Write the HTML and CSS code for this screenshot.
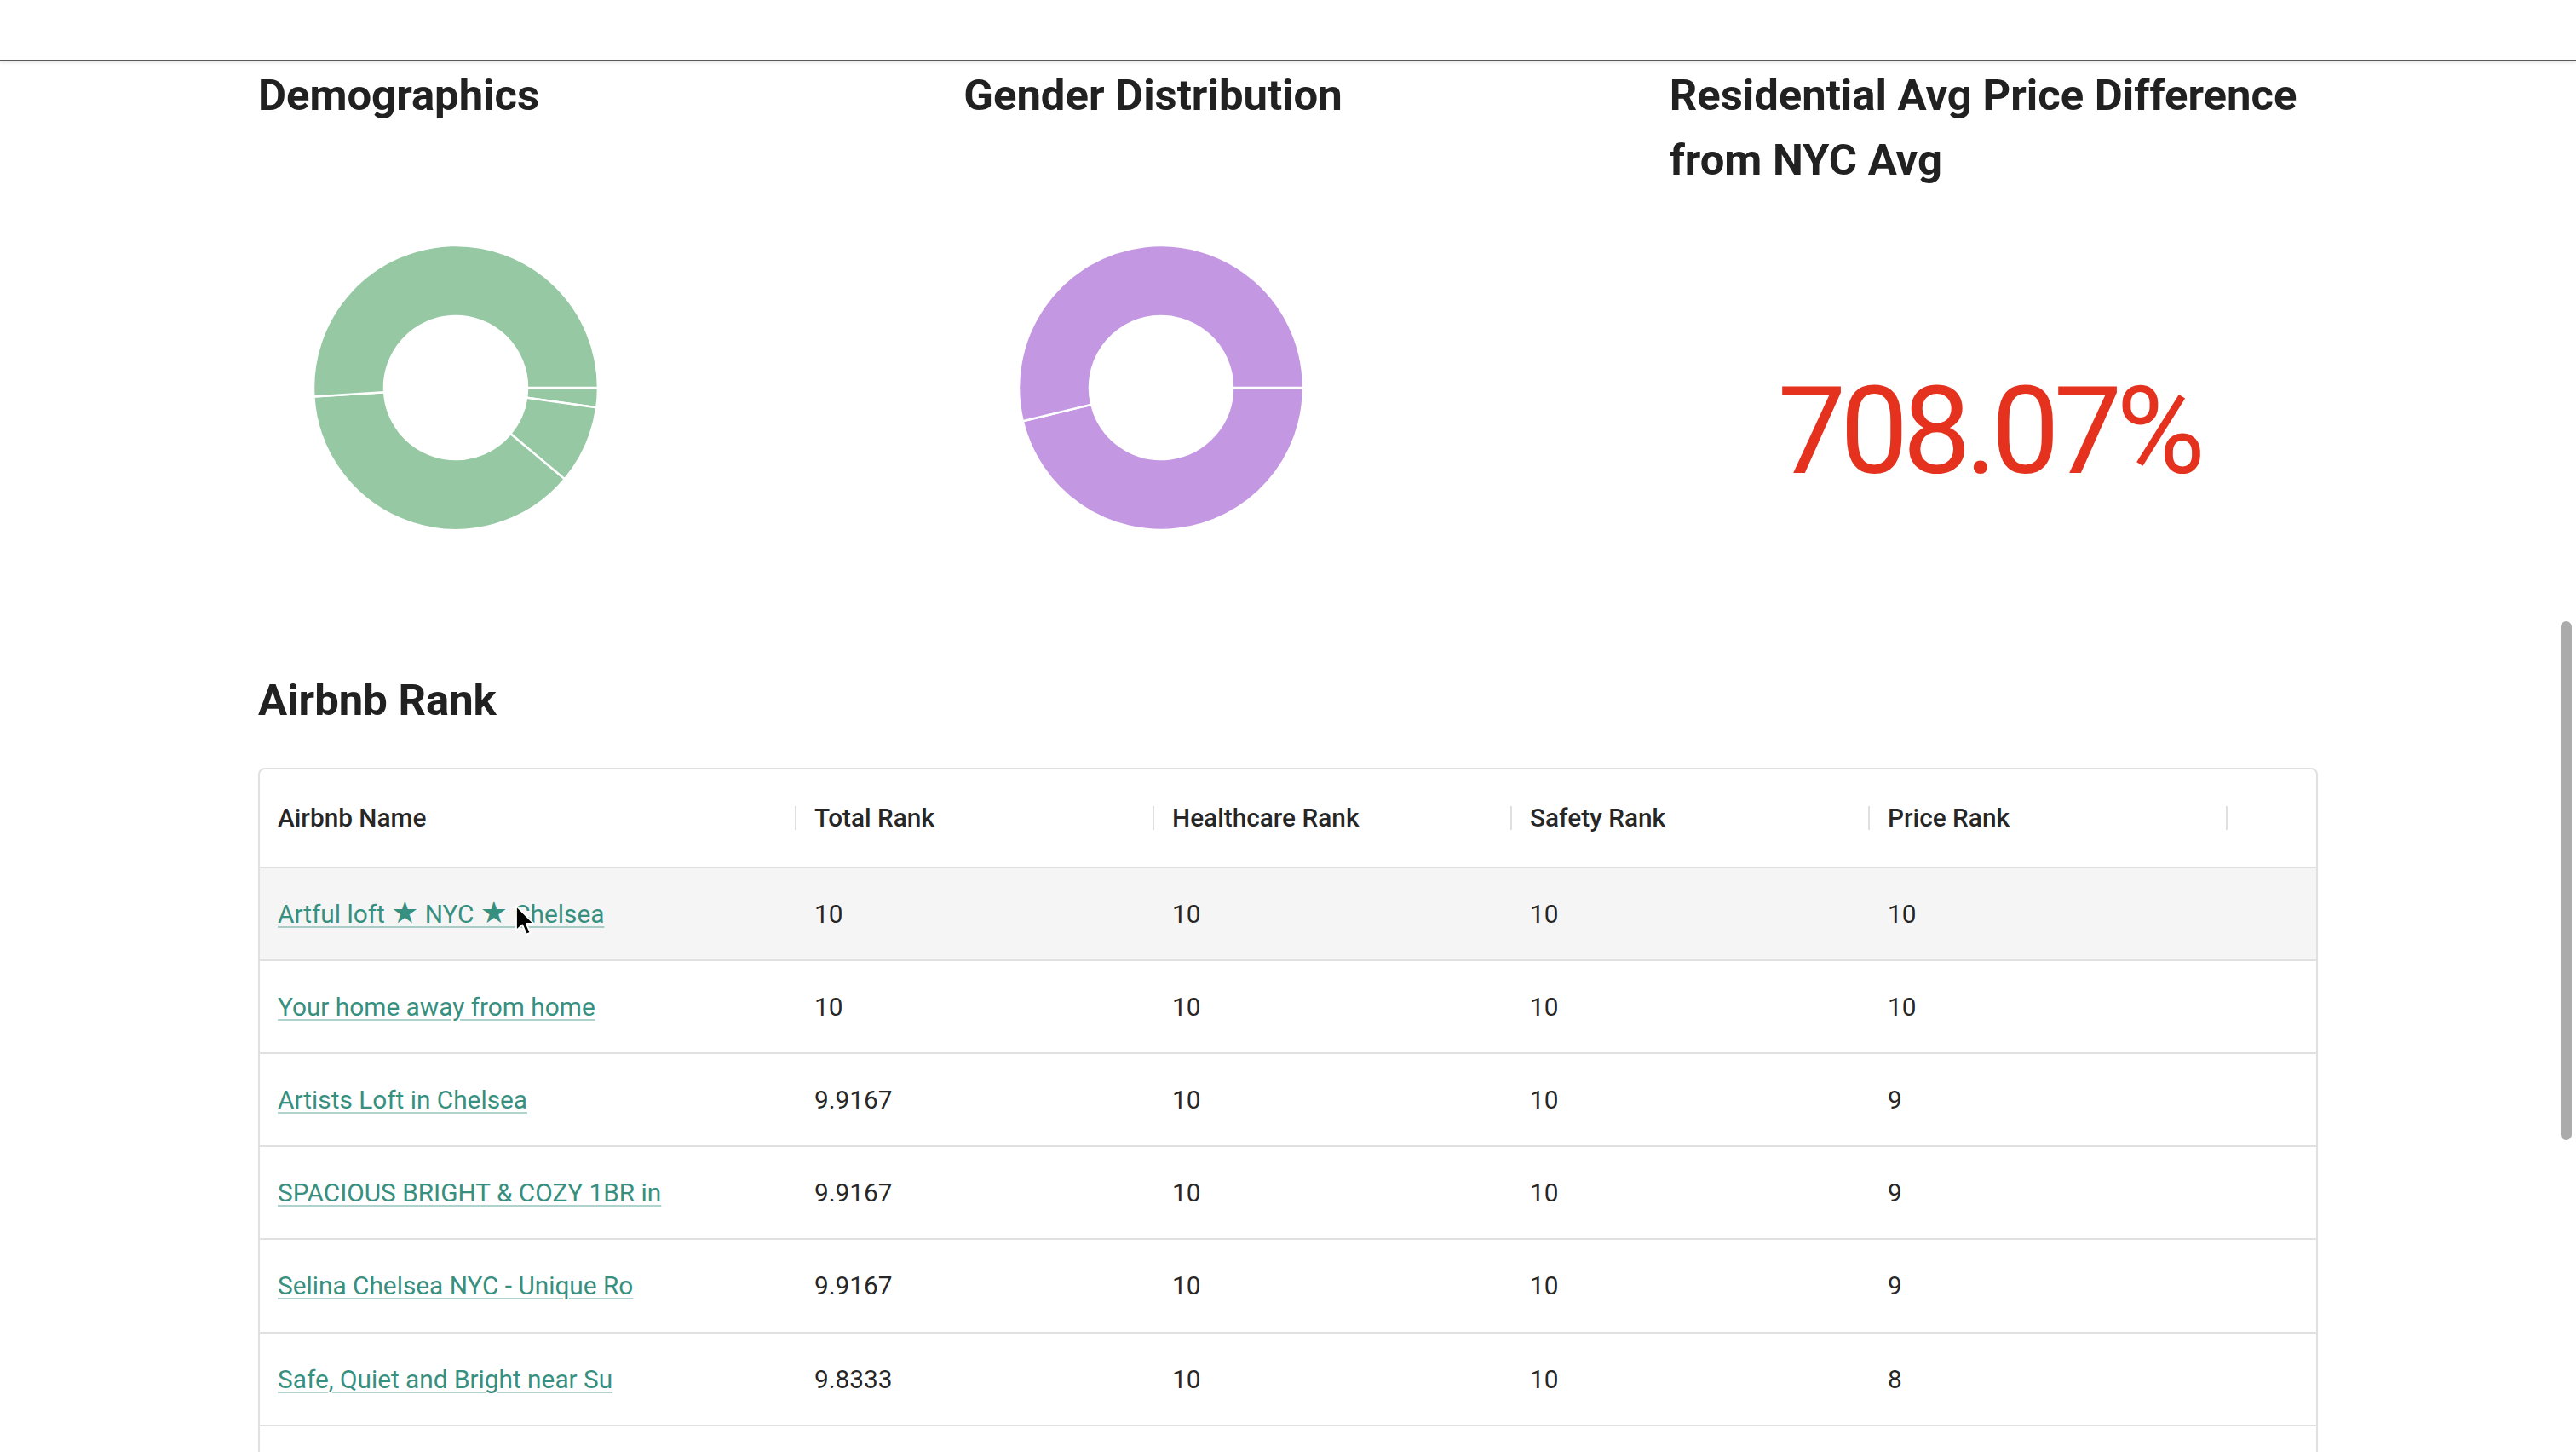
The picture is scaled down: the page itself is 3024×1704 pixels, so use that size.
FILE: index.html
```html
<!DOCTYPE html>
<html lang="en">
<head>
<meta charset="utf-8">
<title>Neighborhood Report</title>
<link rel="stylesheet" href="styles.css">
</head>
<body>
<header class="topbar"></header>
<main class="main">
  <section class="stats">
    <div class="stat">
      <h2 class="section-title">Demographics</h2>
      <svg class="chart" viewBox="0 0 464 610" width="464" height="610">
        <g class="donut-green">
          <path d="M399,305 A167,167 0 0 1 397.375,328.241 L315.183,316.690 A84,84 0 0 0 316,305 Z"/>
          <path d="M397.375,328.241 A167,167 0 0 1 359.929,412.346 L296.347,358.994 A84,84 0 0 0 315.183,316.690 Z"/>
          <path d="M359.929,412.346 A167,167 0 0 1 65.329,315.486 L148.165,310.274 A84,84 0 0 0 296.347,358.994 Z"/>
          <path d="M65.329,315.486 A167,167 0 1 1 399,305 L316,305 A84,84 0 1 0 148.165,310.274 Z"/>
        </g>
      </svg>
    </div>
    <div class="stat">
      <h2 class="section-title">Gender Distribution</h2>
      <svg class="chart" viewBox="0 0 464 610" width="464" height="610">
        <g class="donut-purple">
          <path d="M399,305 A167,167 0 0 1 69.683,344.268 L150.355,324.752 A84,84 0 0 0 316,305 Z"/>
          <path d="M69.683,344.268 A167,167 0 1 1 399,305 L316,305 A84,84 0 1 0 150.355,324.752 Z"/>
        </g>
      </svg>
    </div>
    <div class="stat">
      <h2 class="section-title">Residential Avg Price Difference from NYC Avg</h2>
      <div class="big-number">708.07%</div>
    </div>
  </section>

  <h2 class="section-title rank-title">Airbnb Rank</h2>

  <div class="grid-table">
    <div class="row head">
      <div class="cell name"><span class="label">Airbnb Name</span><span class="sep"></span></div>
      <div class="cell"><span class="label">Total Rank</span><span class="sep"></span></div>
      <div class="cell"><span class="label">Healthcare Rank</span><span class="sep"></span></div>
      <div class="cell"><span class="label">Safety Rank</span><span class="sep"></span></div>
      <div class="cell"><span class="label">Price Rank</span><span class="sep"></span></div>
    </div>
    <div class="row hover">
      <div class="cell name"><a href="#" class="link">Artful loft <span class="star">★</span> NYC <span class="star">★</span> Chelsea</a></div>
      <div class="cell">10</div><div class="cell">10</div><div class="cell">10</div><div class="cell">10</div>
    </div>
    <div class="row">
      <div class="cell name"><a href="#" class="link">Your home away from home</a></div>
      <div class="cell">10</div><div class="cell">10</div><div class="cell">10</div><div class="cell">10</div>
    </div>
    <div class="row">
      <div class="cell name"><a href="#" class="link">Artists Loft in Chelsea</a></div>
      <div class="cell">9.9167</div><div class="cell">10</div><div class="cell">10</div><div class="cell">9</div>
    </div>
    <div class="row">
      <div class="cell name"><a href="#" class="link">SPACIOUS BRIGHT &amp; COZY 1BR in</a></div>
      <div class="cell">9.9167</div><div class="cell">10</div><div class="cell">10</div><div class="cell">9</div>
    </div>
    <div class="row">
      <div class="cell name"><a href="#" class="link">Selina Chelsea NYC - Unique Ro</a></div>
      <div class="cell">9.9167</div><div class="cell">10</div><div class="cell">10</div><div class="cell">9</div>
    </div>
    <div class="row">
      <div class="cell name"><a href="#" class="link">Safe, Quiet and Bright near Su</a></div>
      <div class="cell">9.8333</div><div class="cell">10</div><div class="cell">10</div><div class="cell">8</div>
    </div>
    <div class="row">
      <div class="cell name"></div>
      <div class="cell"></div><div class="cell"></div><div class="cell"></div><div class="cell"></div>
    </div>
  </div>
</main>

<svg class="cursor" width="24" height="38" viewBox="0 0 12 19">
  <path d="M1 1 L1 15.5 L4.6 12.2 L7 17.8 L9.3 16.8 L6.9 11.4 L11.3 11.4 Z" fill="#000" stroke="#fff" stroke-width="0.9" stroke-linejoin="round"/>
</svg>
<div class="scroll-thumb"></div>
</body>
</html>
```

FILE: styles.css
```css
* {
  box-sizing: border-box;
}

html,
body {
  margin: 0;
  padding: 0;
  overflow: hidden;
  background: #ffffff;
}

body {
  position: relative;
  font-family: Roboto, "Noto Sans", "DejaVu Sans", sans-serif;
  color: rgba(0, 0, 0, 0.87);
}

.topbar {
  height: 72px;
  background: #ffffff;
  border-bottom: 2px solid #5a5a5a;
  box-shadow: 0 2px 3px rgba(0, 0, 0, 0.08);
}

.main {
  width: 2418px;
  margin: 0 auto;
  padding-top: 2px;
}

.stats {
  display: grid;
  grid-template-columns: repeat(3, 1fr);
  column-gap: 67px;
  align-items: start;
}

.section-title {
  margin: 0;
  font-size: 50.8px;
  line-height: 75.6px;
  font-weight: 700;
  color: #212121;
}

.chart {
  display: block;
  width: 464px;
  height: 610px;
}

.donut-green path {
  fill: #96c9a3;
  stroke: #ffffff;
  stroke-width: 2.5;
}

.donut-purple path {
  fill: #c497e3;
  stroke: #ffffff;
  stroke-width: 2.5;
}

.big-number {
  margin-top: 209.4px;
  padding-right: 12px;
  font-size: 143px;
  line-height: 143px;
  font-weight: 400;
  letter-spacing: -7px;
  text-align: center;
  color: #e5321f;
}

.rank-title {
  margin-top: 24px;
}

.grid-table {
  margin-top: 41.8px;
  border: 2px solid #e0e0e0;
  border-radius: 8px;
  overflow: hidden;
  font-size: 29.8px;
}

.row {
  display: flex;
  align-items: center;
  height: 109.2px;
  border-bottom: 2px solid #e0e0e0;
}

.row.head {
  height: 115.6px;
  font-weight: 500;
}

.row.hover {
  background: #f5f5f5;
}

.cell {
  flex: none;
  width: 420px;
  height: 100%;
  display: flex;
  align-items: center;
  padding-left: 21px;
  white-space: nowrap;
}

.cell.name {
  width: 630px;
}

.label {
  flex: 1;
}

.sep {
  flex: none;
  width: 2px;
  height: 28px;
  background: #e0e0e0;
}

.link {
  color: #37907f;
  text-decoration: underline;
  text-decoration-color: rgba(55, 144, 127, 0.4);
  text-decoration-thickness: 2px;
  text-underline-offset: 4px;
}

.star {
  font-size: 1.2em;
  line-height: 1;
}

.cursor {
  position: absolute;
  left: 604px;
  top: 1061px;
}

.scroll-thumb {
  position: fixed;
  left: 3006px;
  top: 729px;
  width: 13px;
  height: 609px;
  border-radius: 7px;
  background: #ababab;
}
```
